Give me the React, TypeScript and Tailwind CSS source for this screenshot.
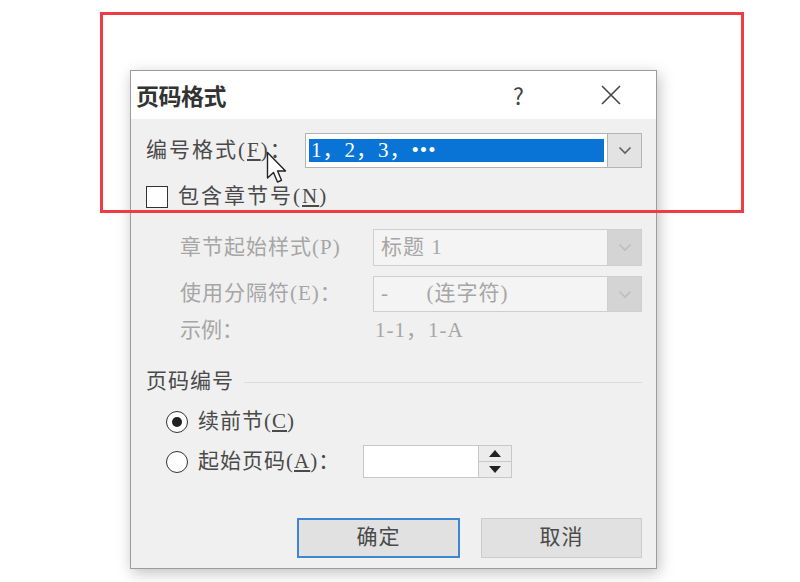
import React from "react"

const FONT = { fontFamily: '"Liberation Serif", "Noto Sans CJK SC", serif' }
const TITLE_FONT = { fontFamily: '"Noto Sans CJK SC", "Liberation Sans", sans-serif' }

function Chevron({ color = "#606060" }: { color?: string }) {
  return (
    <svg width="14" height="9" viewBox="0 0 14 9">
      <path d="M1.5 1.5 L7 7 L12.5 1.5" fill="none" stroke={color} strokeWidth="1.6" />
    </svg>
  )
}

function Combo({ children, disabled, width }: { children: React.ReactNode; disabled?: boolean; width: string }) {
  return (
    <div
      className={`flex h-full ${width} border ${disabled ? "border-[#cfcfcf] bg-[#f4f4f4]" : "border-[#b4b4b4] bg-white"}`}
    >
      <div className="flex-1 flex items-center px-[3px] min-w-0">{children}</div>
      <div
        className={`w-[34px] flex items-center justify-center border-l ${disabled ? "bg-[#d4d4d4] border-[#cfcfcf]" : "bg-[#e3e3e3] border-[#b4b4b4]"}`}
      >
        <Chevron color={disabled ? "#bdbdbd" : "#606060"} />
      </div>
    </div>
  )
}

function Cursor() {
  return (
    <svg className="absolute left-[266px] top-[151px]" width="24" height="36" viewBox="0 0 24 36">
      <path
        d="M1.5 1.5 L1.5 27 L7.5 21.5 L11.5 31 L15.5 29.3 L11.6 20 L19.5 20 Z"
        fill="#ffffff"
        stroke="#222"
        strokeWidth="1.4"
        strokeLinejoin="round"
      />
    </svg>
  )
}

export default function App() {
  return (
    <div className="relative w-[800px] h-[582px] bg-white overflow-hidden pl-[130px] pt-[70px]" style={FONT}>
      {/* Dialog */}
      <div className="w-[527px] h-[499px] flex flex-col border border-[#9c9c9c] shadow-[2px_4px_14px_rgba(0,0,0,0.25)] bg-[#f0f0f0]">
        {/* Title bar */}
        <div className="h-[48px] bg-white flex items-center pl-[5px] pr-[34px]" style={TITLE_FONT}>
          <span className="text-[23px] font-bold text-[#333] tracking-[-0.5px]">页码格式</span>
          <span className="ml-auto text-[23px] text-[#444] mr-[76px]">?</span>
          <svg width="22" height="22" viewBox="0 0 22 22">
            <path d="M2 2 L20 20 M20 2 L2 20" stroke="#444" strokeWidth="1.6" />
          </svg>
        </div>

        {/* Body */}
        <div className="flex-1 flex flex-col pl-[15px] pr-[14px] text-[#4a4a4a]">
          {/* Number format */}
          <div className="flex items-center h-[35px] mt-[14px]">
            <span className="w-[159px] text-[21px] tracking-[2px]">
              编号格式(<u>F</u>)：
            </span>
            <Combo width="flex-1">
              <div className="w-full h-[23px] bg-[#0a74d6] text-white text-[21px] leading-[23px] px-[2px] tracking-[1px]">1，2，3，•••</div>
            </Combo>
          </div>

          {/* Include chapter number */}
          <div className="flex items-center h-[22px] mt-[18px]">
            <div className="w-[22px] h-[22px] border-[1.5px] border-[#333] bg-white" />
            <span className="ml-[10px] text-[21px] tracking-[2px]">
              包含章节号(<u>N</u>)
            </span>
          </div>

          {/* Chapter style */}
          <div className="flex items-center h-[37px] mt-[21px] pl-[34px] text-[#a6a6a6]">
            <span className="w-[193px] text-[21px] tracking-[1px]">章节起始样式(P)</span>
            <Combo width="flex-1" disabled>
              <span className="text-[21px] text-[#a6a6a6] pl-[4px] tracking-[1px]">标题 1</span>
            </Combo>
          </div>

          {/* Separator */}
          <div className="flex items-center h-[36px] mt-[10px] pl-[34px] text-[#a6a6a6]">
            <span className="w-[193px] text-[21px] tracking-[1px]">使用分隔符(E)：</span>
            <Combo width="flex-1" disabled>
              <span className="text-[21px] text-[#a6a6a6] pl-[4px] whitespace-pre tracking-[1px]">-      (连字符)</span>
            </Combo>
          </div>

          {/* Example */}
          <div className="flex items-center h-[24px] mt-[7px] pl-[34px] text-[#a6a6a6]">
            <span className="w-[195px] text-[21px]">示例：</span>
            <span className="text-[21px] tracking-[1px]">1-1，1-A</span>
          </div>

          {/* Page numbering group */}
          <div className="flex items-center h-[24px] mt-[27px]">
            <span className="text-[21px] text-[#4a4a4a] tracking-[1px]">页码编号</span>
            <div className="flex-1 h-px bg-[#dcdcdc] ml-[10px]" />
          </div>

          <div className="flex items-center h-[24px] mt-[16px] pl-[20px]">
            <div className="w-[22px] h-[22px] rounded-full border-[1.5px] border-[#333] bg-white flex items-center justify-center">
              <div className="w-[10px] h-[10px] rounded-full bg-[#222]" />
            </div>
            <span className="ml-[10px] text-[21px] tracking-[1px]">
              续前节(<u>C</u>)
            </span>
          </div>

          <div className="flex items-center h-[33px] mt-[11px] pl-[20px]">
            <div className="w-[22px] h-[22px] rounded-full border-[1.5px] border-[#333] bg-white" />
            <span className="ml-[10px] w-[165px] text-[21px] tracking-[1px]">
              起始页码(<u>A</u>)：
            </span>
            <div className="flex h-full w-[149px] border border-[#c8c8c8] bg-white">
              <div className="flex-1" />
              <div className="w-[33px] flex flex-col border-l border-[#c8c8c8] bg-[#ececec]">
                <div className="flex-1 flex items-center justify-center border-b border-[#c8c8c8]">
                  <svg width="12" height="7" viewBox="0 0 12 7">
                    <path d="M0 7 L6 0 L12 7 Z" fill="#222" />
                  </svg>
                </div>
                <div className="flex-1 flex items-center justify-center">
                  <svg width="12" height="7" viewBox="0 0 12 7">
                    <path d="M0 0 L6 7 L12 0 Z" fill="#222" />
                  </svg>
                </div>
              </div>
            </div>
          </div>

          {/* Buttons */}
          <div className="flex justify-end gap-[21px] mt-[40px]">
            <button className="w-[163px] h-[40px] bg-[#e1e1e1] border-2 border-[#3d86d0] text-[21px] text-[#4a4a4a] tracking-[1px]">
              确定
            </button>
            <button className="w-[161px] h-[40px] bg-[#e1e1e1] border border-[#cccccc] text-[21px] text-[#4a4a4a] tracking-[1px]">
              取消
            </button>
          </div>
        </div>
      </div>

      <Cursor />

      {/* Red highlight */}
      <div className="absolute left-[100px] top-[12px] w-[644px] h-[201px] border-[3px] border-[#ee3b44] pointer-events-none" />
    </div>
  )
}
